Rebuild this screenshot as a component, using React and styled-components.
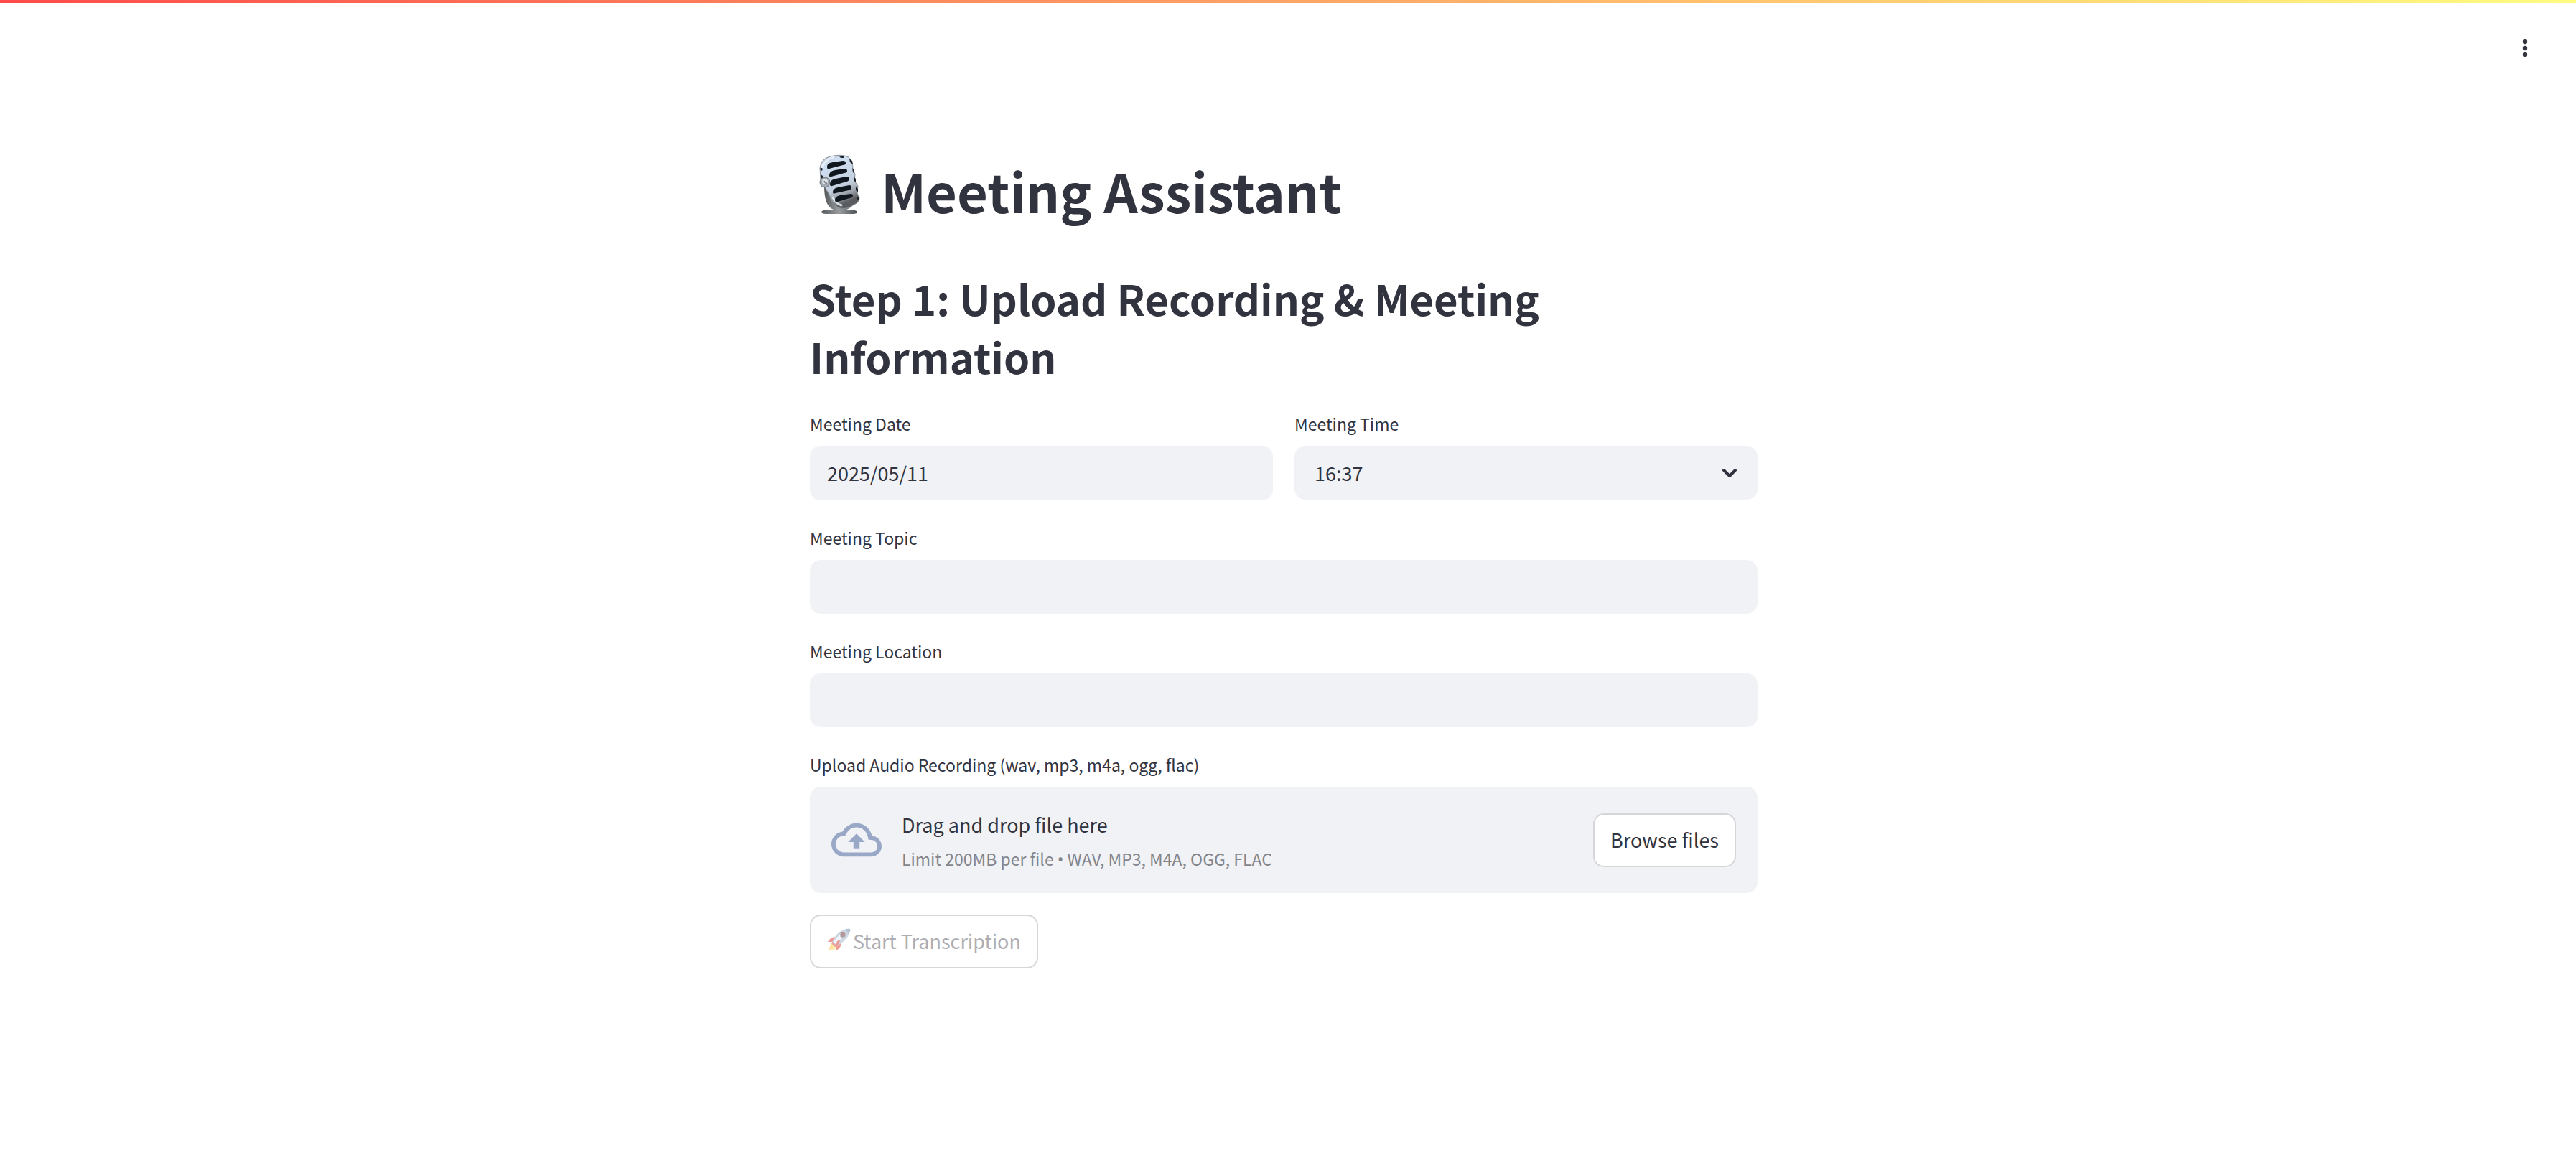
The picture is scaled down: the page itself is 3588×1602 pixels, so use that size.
import React, { useRef, useState } from "react";
import styled, { createGlobalStyle } from "styled-components";

const GlobalStyle = createGlobalStyle`
  *, *::before, *::after { box-sizing: border-box; }
  body {
    margin: 0;
    background: #ffffff;
    color: #31333f;
    font-family: "Noto Sans CJK SC", "Noto Sans", sans-serif;
    font-size: 27px;
    line-height: 45px;
  }
  button, input, select { font: inherit; color: inherit; }
`;

const Decoration = styled.div`
  height: 4px;
  background: linear-gradient(90deg, #ff4b4b, #fffd80);
`;

const Toolbar = styled.header`
  display: flex;
  justify-content: flex-end;
  padding: 38px 46px 0;
`;

const MenuButton = styled.button`
  display: flex;
  align-items: center;
  justify-content: center;
  width: 50px;
  height: 50px;
  padding: 0;
  border: 0;
  border-radius: 15px;
  background: transparent;
  cursor: pointer;
`;

const Main = styled.main`
  display: flex;
  flex-direction: column;
  gap: 30px;
  width: 100%;
  max-width: 1392px;
  margin: 0 auto;
  padding: 123px 42px 120px 30px;
`;

const Title = styled.h1`
  display: flex;
  align-items: flex-start;
  gap: 17px;
  margin: 0 0 31px;
  font-size: 74px;
  font-weight: 700;
  line-height: 99px;
`;

const Heading = styled.h2`
  margin: 0 0 1px;
  font-size: 58px;
  font-weight: 700;
  line-height: 81px;
`;

const Columns = styled.div`
  display: grid;
  grid-template-columns: 1fr 1fr;
  gap: 30px;
`;

const Field = styled.div`
  display: flex;
  flex-direction: column;
  gap: 8px;
`;

const Label = styled.label`
  align-self: flex-start;
  font-size: 23px;
  line-height: 45px;
`;

const TextInput = styled.input`
  width: 100%;
  height: ${(p) => (p.$tall ? 76 : 75)}px;
  padding: 0 24px 2px;
  border: 0;
  border-radius: 15px;
  background: #f0f2f6;
  &:focus-visible { outline: 2px solid #ff4b4b; }
`;

const SelectBox = styled.div`
  display: grid;
  align-items: center;
  & > * { grid-area: 1 / 1; }
  & > svg { justify-self: end; margin-right: 21px; pointer-events: none; }
`;

const Select = styled.select`
  appearance: none;
  width: 100%;
  height: 75px;
  padding: 0 60px 0 28px;
  border: 0;
  border-radius: 15px;
  background: #f0f2f6;
`;

const Dropzone = styled.div`
  display: flex;
  align-items: center;
  padding: 30px;
  border-radius: 15px;
  background: #f0f2f6;
`;

const DropText = styled.div`
  display: flex;
  flex-direction: column;
  gap: 8px;
  flex: 1;
  margin-left: 28px;
`;

const DropHint = styled.span`
  font-size: 27px;
  line-height: 45px;
`;

const DropLimit = styled.span`
  font-size: 23px;
  line-height: 35px;
  color: #83858c;
`;

const Bullet = styled.span`
  font-family: "Noto Sans", sans-serif;
  line-height: 1;
`;

const Button = styled.button`
  display: inline-flex;
  align-items: center;
  align-self: ${(p) => (p.$start ? "flex-start" : "center")};
  gap: 2px;
  height: 75px;
  padding: 0 22px 2px;
  border: 2px solid #d6d6d9;
  border-radius: 15px;
  background: #ffffff;
  white-space: nowrap;
  cursor: pointer;
  &:disabled { color: #adadb2; cursor: not-allowed; }
`;

function Microphone() {
  return (
    <svg width="82" height="99" viewBox="0 0 82 99" aria-hidden="true">
      <defs>
        <linearGradient id="micBody" x1="0" y1="0" x2="0.35" y2="1">
          <stop offset="0" stopColor="#a9afb7" />
          <stop offset="0.2" stopColor="#cfdff2" />
          <stop offset="0.7" stopColor="#c3cfde" />
          <stop offset="0.88" stopColor="#94989f" />
          <stop offset="1" stopColor="#5a5c60" />
        </linearGradient>
        <linearGradient id="micStand" x1="0" y1="0" x2="1" y2="0">
          <stop offset="0" stopColor="#55585b" />
          <stop offset="0.5" stopColor="#9a9d9f" />
          <stop offset="1" stopColor="#4c4f52" />
        </linearGradient>
      </defs>
      <path d="M16 80Q17 77 31 77H51Q65 77 66 80Q66 83 60 83H23Q16 83 16 80Z" fill="url(#micStand)" />
      <path d="M20 43C20 61 23 73 33 77H51Q59 74 61 68L47 74Q31 73 29 56L27 42Z" fill="url(#micStand)" />
      <path d="M14 19Q16 6 28 3Q44-1 54 4Q60 10 60 20L63 28L62 37L67 44L66 54L69 61Q68 68 61 70Q54 77 42 75Q31 71 27 56L20 44L15 35Z" fill="url(#micBody)" stroke="#8b9199" strokeWidth="1" />
      <path d="M17 18Q21 7 33 4M32 60Q36 69 44 71" fill="none" stroke="#eef5fb" strokeWidth="3" strokeLinecap="round" opacity=".8" />
      <path d="M41 3L48 2L48 5L43 5ZM55 6L59 9L60 14L56 11ZM59 19L62 22L62 27L60 25ZM61 31L64 34L64 39L61 36ZM64 45L67 48L67 53L64 50ZM65 58L68 60L68 64L65 62ZM15 18L18 20L17 23L14 21ZM15 28L18 30L18 35L16 34Z" fill="#20252b" />
      <g fill="#10171e">
        <path d="M24 18C24 13 27 12 32 11L46 9Q50 9 50 12Q50 15 46 15L27 20Q24 21 24 18Z" />
        <path d="M27 30C27 25 30 23 35 22L48 20Q52 20 52 23Q52 26 48 26L30 31Q27 32 27 30Z" />
        <path d="M28 42C28 37 31 35 36 34L51 31Q55 31 55 34Q55 37 51 38L31 44Q28 45 28 42Z" />
        <path d="M32 53C32 49 35 47 39 46L55 43Q58 43 58 46Q58 49 54 50L36 54Q32 56 32 53Z" />
        <path d="M35 64C35 60 38 58 42 57L57 55Q60 55 60 58Q59 61 55 61L39 66Q35 67 35 64Z" />
      </g>
      <circle cx="21" cy="39" r="7" fill="#a3a9b0" stroke="#6b7178" />
      <circle cx="21" cy="38" r="4" fill="#dbe1e7" />
      <path d="M20 37Q21 41 24 40" fill="none" stroke="#777e86" strokeWidth="1.5" />
    </svg>
  );
}

function Rocket() {
  return (
    <svg width="34" height="38" viewBox="0 0 34 38" aria-hidden="true" opacity=".5">
      <path d="M7 20L2 31Q8 31 12 25Z" fill="#ffc43b" />
      <path d="M10 23L5 33Q13 31 15 24Z" fill="#ffdc62" />
      <path d="M12 13Q5 13 1 20L10 20Z" fill="#d83732" />
      <path d="M20 21Q20 28 13 32L12 23Z" fill="#e33d34" />
      <path d="M7 21Q11 9 21 4Q27 1 32 2Q32 10 26 16Q19 24 11 26Z" fill="#9eb2ca" />
      <path d="M9 20Q16 9 29 4Q24 14 11 23Z" fill="#e2edf8" />
      <path d="M25 3Q29 1 32 2Q33 5 30 9Z" fill="#6d89ab" />
      <circle cx="22" cy="10" r="4" fill="#6c3038" stroke="#8294a7" />
      <path d="M8 20L13 25L11 27L6 22Z" fill="#d74136" />
      <path d="M14 19L18 17Q18 21 14 25L12 25Z" fill="#d9332f" />
    </svg>
  );
}

function CloudUpload() {
  return (
    <svg width="70" height="70" viewBox="0 0 24 24" fill="#9aa8c8" aria-hidden="true">
      <path d="M19.35 10.04A7.49 7.49 0 0 0 12 4C9.11 4 6.6 5.64 5.35 8.04A5.994 5.994 0 0 0 0 14c0 3.31 2.69 6 6 6h13c2.76 0 5-2.24 5-5 0-2.64-2.05-4.78-4.65-4.96zM19 18H6c-2.21 0-4-1.79-4-4 0-2.05 1.53-3.76 3.56-3.97l1.07-.11.5-.95A5.469 5.469 0 0 1 12 6c2.62 0 4.88 1.86 5.39 4.43l.3 1.5 1.53.11A2.98 2.98 0 0 1 22 15c0 1.65-1.35 3-3 3zM8 13h2.55v3h2.9v-3H16l-4-4z" />
    </svg>
  );
}

export default function App() {
  const fileRef = useRef(null);
  const [date, setDate] = useState("2025/05/11");
  return (
    <>
      <GlobalStyle />
      <Decoration />
      <Toolbar>
        <MenuButton type="button" aria-label="Main menu">
          <svg width="8" height="26" viewBox="0 0 8 26" fill="#31333f" aria-hidden="true">
            <circle cx="4" cy="4" r="3.2" />
            <circle cx="4" cy="13" r="3.2" />
            <circle cx="4" cy="22" r="3.2" />
          </svg>
        </MenuButton>
      </Toolbar>
      <Main>
        <Title>
          <Microphone />
          Meeting Assistant
        </Title>
        <Heading>Step 1: Upload Recording &amp; Meeting Information</Heading>
        <Columns>
          <Field>
            <Label htmlFor="date">Meeting Date</Label>
            <TextInput id="date" $tall value={date} onChange={(e) => setDate(e.target.value)} />
          </Field>
          <Field>
            <Label htmlFor="time">Meeting Time</Label>
            <SelectBox>
              <Select id="time" defaultValue="16:37">
                <option>16:37</option>
                <option>16:45</option>
                <option>17:00</option>
              </Select>
              <svg width="36" height="36" viewBox="0 0 36 36" fill="none" stroke="#31333f" strokeWidth="4" strokeLinecap="round" strokeLinejoin="round" aria-hidden="true">
                <path d="M10 14l8 8 8-8" />
              </svg>
            </SelectBox>
          </Field>
        </Columns>
        <Field>
          <Label htmlFor="topic">Meeting Topic</Label>
          <TextInput id="topic" />
        </Field>
        <Field>
          <Label htmlFor="location">Meeting Location</Label>
          <TextInput id="location" />
        </Field>
        <Field>
          <Label htmlFor="audio">Upload Audio Recording (wav, mp3, m4a, ogg, flac)</Label>
          <Dropzone>
            <input ref={fileRef} id="audio" type="file" accept=".wav,.mp3,.m4a,.ogg,.flac" hidden />
            <CloudUpload />
            <DropText>
              <DropHint>Drag and drop file here</DropHint>
              <DropLimit>
                Limit 200MB per file <Bullet>•</Bullet> WAV, MP3, M4A, OGG, FLAC
              </DropLimit>
            </DropText>
            <Button type="button" onClick={() => fileRef.current.click()}>Browse files</Button>
          </Dropzone>
        </Field>
        <Button type="button" $start disabled>
          <Rocket />
          Start Transcription
        </Button>
      </Main>
    </>
  );
}
